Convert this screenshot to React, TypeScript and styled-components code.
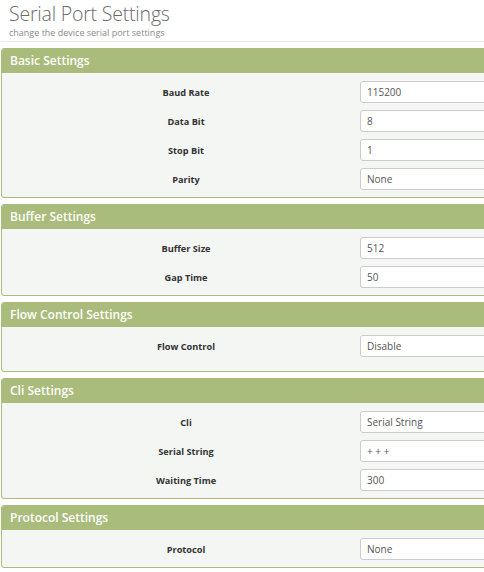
import React from "react";
import styled, { createGlobalStyle } from "styled-components";

const GlobalStyle = createGlobalStyle`
  html, body {
    margin: 0;
    padding: 0;
    overflow: hidden;
    background: #ffffff;
  }
  body {
    font-family: "Open Sans", "Noto Sans", "Liberation Sans", sans-serif;
    color: #333;
  }
`;

const Page = styled.div`
  width: 600px;
  padding: 0 0 0 1px;
`;

const TitleBlock = styled.div`
  padding: 0 0 2px 8px;
  border-bottom: 1px solid #ececec;
  margin-bottom: 6px;
`;

const Title = styled.h1`
  margin: 0;
  font-size: 19.5px;
  font-weight: 300;
  line-height: 27px;
  color: #6b6b6b;
  letter-spacing: -0.2px;
`;

const Subtitle = styled.div`
  font-size: 9px;
  color: #8a8a8a;
  line-height: 12px;
  margin-top: 0;
`;

const Panel = styled.section`
  border: 1px solid #a9bc7b;
  border-radius: 3px;
  background: #f4f6f4;
  margin-bottom: 6px;
  overflow: hidden;
`;

const PanelHeader = styled.div`
  background: #a9bc7b;
  color: #ffffff;
  height: 24px;
  line-height: 24px;
  padding-left: 8px;
  font-size: 12px;
  font-weight: 600;
`;

const PanelBody = styled.div<{ $extra?: number }>`
  padding: 8px 0 ${({ $extra }) => 7 + ($extra || 0)}px 0;
  display: flex;
  flex-direction: column;
  gap: 7px;
`;

const Row = styled.div`
  display: grid;
  grid-template-columns: 358px 1fr;
  align-items: center;
  height: 22px;
`;

const Label = styled.label`
  text-align: center;
  padding-left: 10px;
  font-size: 9.2px;
  font-weight: 700;
  color: #333;
`;

const Field = styled.div`
  height: 20px;
  border: 1px solid #cccccc;
  border-radius: 3px;
  background: #ffffff;
  display: flex;
  align-items: center;
  padding-left: 6px;
  font-size: 10px;
  color: #555;
`;

type Setting = { label: string; value: string };

type Group = { title: string; rows: Setting[]; extra?: number };

const groups: Group[] = [
  {
    title: "Basic Settings",
    rows: [
      { label: "Baud Rate", value: "115200" },
      { label: "Data Bit", value: "8" },
      { label: "Stop Bit", value: "1" },
      { label: "Parity", value: "None" },
    ],
  },
  {
    title: "Buffer Settings",
    rows: [
      { label: "Buffer Size", value: "512" },
      { label: "Gap Time", value: "50" },
    ],
  },
  {
    title: "Flow Control Settings",
    rows: [{ label: "Flow Control", value: "Disable" }],
    extra: 7,
  },
  {
    title: "Cli Settings",
    rows: [
      { label: "Cli", value: "Serial String" },
      { label: "Serial String", value: "+++" },
      { label: "Waiting Time", value: "300" },
    ],
  },
  {
    title: "Protocol Settings",
    rows: [{ label: "Protocol", value: "None" }],
  },
];

const App: React.FC = () => {
  return (
    <Page>
      <GlobalStyle />
      <TitleBlock>
        <Title>Serial Port Settings</Title>
        <Subtitle>change the device serial port settings</Subtitle>
      </TitleBlock>
      {groups.map((g) => (
        <Panel key={g.title}>
          <PanelHeader>{g.title}</PanelHeader>
          <PanelBody $extra={g.extra}>
            {g.rows.map((r) => (
              <Row key={r.label}>
                <Label>{r.label}</Label>
                <Field>{r.value === "+++" ? "+ + +" : r.value}</Field>
              </Row>
            ))}
          </PanelBody>
        </Panel>
      ))}
    </Page>
  );
};

export default App;
